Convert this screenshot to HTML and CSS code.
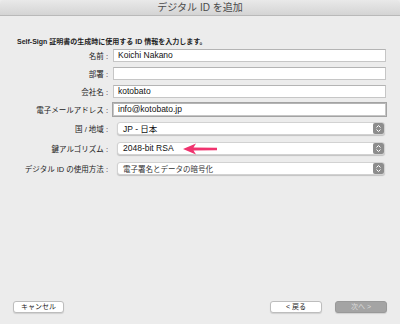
FILE: index.html
```html
<!DOCTYPE html>
<html lang="ja">
<head>
    <meta charset="UTF-8">
    <title>デジタル ID を追加</title>
    <link rel="stylesheet" href="styles.css">
</head>
<body>
    <div class="window">
        <div class="titlebar">デジタル ID を追加</div>

        <div class="content">
            <p class="intro">Self-Sign 証明書の生成時に使用する ID 情報を入力します。</p>

            <div class="row">
                <label for="name">名前 :</label>
                <input type="text" id="name" value="Koichi Nakano">
            </div>
            <div class="row">
                <label for="dept">部署 :</label>
                <input type="text" id="dept" value="">
            </div>
            <div class="row">
                <label for="company">会社名 :</label>
                <input type="text" id="company" value="kotobato">
            </div>
            <div class="row">
                <label for="email">電子メールアドレス :</label>
                <input type="text" id="email" class="focused" value="info@kotobato.jp">
            </div>

            <div class="row sel">
                <label>国 / 地域 :</label>
                <div class="popup">
                    <span class="value">JP - 日本</span>
                    <span class="stepper">
                        <svg width="11" height="11" viewBox="0 0 11 11"><path d="M3.5 4.5 L5.5 2.5 L7.5 4.5 M3.5 6.5 L5.5 8.5 L7.5 6.5" fill="none" stroke="#fff" stroke-width="1"/></svg>
                    </span>
                </div>
            </div>
            <div class="row sel">
                <label>鍵アルゴリズム :</label>
                <div class="popup">
                    <span class="value">2048-bit RSA</span>
                    <svg class="arrow" width="34" height="12" viewBox="0 0 34 12"><path d="M0 6 L13 0.5 L10.5 4.6 L34 4.8 L34 7.2 L10.5 7.4 L13 11.5 Z" fill="#f0336e"/></svg>
                    <span class="stepper">
                        <svg width="11" height="11" viewBox="0 0 11 11"><path d="M3.5 4.5 L5.5 2.5 L7.5 4.5 M3.5 6.5 L5.5 8.5 L7.5 6.5" fill="none" stroke="#fff" stroke-width="1"/></svg>
                    </span>
                </div>
            </div>
            <div class="row sel">
                <label>デジタル ID の使用方法 :</label>
                <div class="popup">
                    <span class="value small">電子署名とデータの暗号化</span>
                    <span class="stepper">
                        <svg width="11" height="11" viewBox="0 0 11 11"><path d="M3.5 4.5 L5.5 2.5 L7.5 4.5 M3.5 6.5 L5.5 8.5 L7.5 6.5" fill="none" stroke="#fff" stroke-width="1"/></svg>
                    </span>
                </div>
            </div>
        </div>

        <div class="footer">
            <button type="button" class="btn">キャンセル</button>
            <div class="nav">
                <button type="button" class="btn">&lt; 戻る</button>
                <button type="button" class="btn disabled">次へ &gt;</button>
            </div>
        </div>
    </div>
</body>
</html>
```

FILE: styles.css
```css
* {
    box-sizing: border-box;
}

body {
    margin: 0;
    background: #ececec;
    font-family: "Liberation Sans", "Noto Sans CJK JP", sans-serif;
    color: #222;
}

.window {
    width: 400px;
    height: 324px;
    display: flex;
    flex-direction: column;
}

.titlebar {
    height: 16px;
    line-height: 15px;
    text-align: center;
    font-size: 10px;
    color: #4a4a4a;
    background: linear-gradient(#e9e9e9, #d4d4d4);
    border-bottom: 1px solid #b9b9b9;
    border-radius: 4px 4px 0 0;
}

.content {
    padding: 22px 14px 0 17px;
}

.intro {
    margin: 0;
    height: 8px;
    line-height: 8px;
    font-size: 7px;
    font-weight: bold;
    color: #1e1e1e;
    white-space: nowrap;
}

.row {
    display: grid;
    grid-template-columns: 91px 1fr;
    column-gap: 5px;
    align-items: center;
    height: 18px;
}

.row.sel {
    height: 20px;
}

.row label {
    text-align: right;
    font-size: 7.5px;
    color: #222;
    white-space: nowrap;
}

.row input {
    height: 13px;
    margin: 0;
    padding: 0 4px;
    border: 1px solid #c6c6c6;
    border-top-color: #b4b4b4;
    background: #fff;
    font-family: inherit;
    font-size: 8.5px;
    color: #111;
    outline: none;
}

.row input.focused {
    box-shadow: 0 0 0 1px #a3a3a3;
}

.popup {
    position: relative;
    height: 13px;
    margin: 0 1px 0 4px;
    padding: 0 0 0 5px;
    display: flex;
    align-items: center;
    justify-content: space-between;
    background: #fff;
    border: 1px solid #d2d2d2;
    border-radius: 3px;
    box-shadow: 0 1px 1px rgba(0, 0, 0, 0.18);
}

.popup .value {
    font-size: 8.5px;
    color: #111;
    white-space: nowrap;
}

.popup .value.small {
    font-size: 7.5px;
    color: #333;
}

.stepper {
    width: 11px;
    height: 11px;
    border-radius: 2px;
    background: #8d8d8d;
    display: flex;
}

.arrow {
    position: absolute;
    left: 65px;
    top: 0;
}

.footer {
    margin-top: auto;
    padding: 0 13px 11px 13px;
    display: flex;
    justify-content: space-between;
    align-items: flex-end;
}

.nav {
    display: flex;
    gap: 13px;
}

.btn {
    width: 52px;
    height: 12px;
    padding: 0;
    font-family: inherit;
    font-size: 7px;
    line-height: 10px;
    color: #222;
    background: #fff;
    border: 1px solid #bdbdbd;
    border-radius: 3px;
    box-shadow: 0 1px 1px rgba(0, 0, 0, 0.12);
}

.footer > .btn {
    width: 51px;
}

.btn.disabled {
    background: #a4a4a4;
    border-color: #999;
    color: #dcdcdc;
}
```
